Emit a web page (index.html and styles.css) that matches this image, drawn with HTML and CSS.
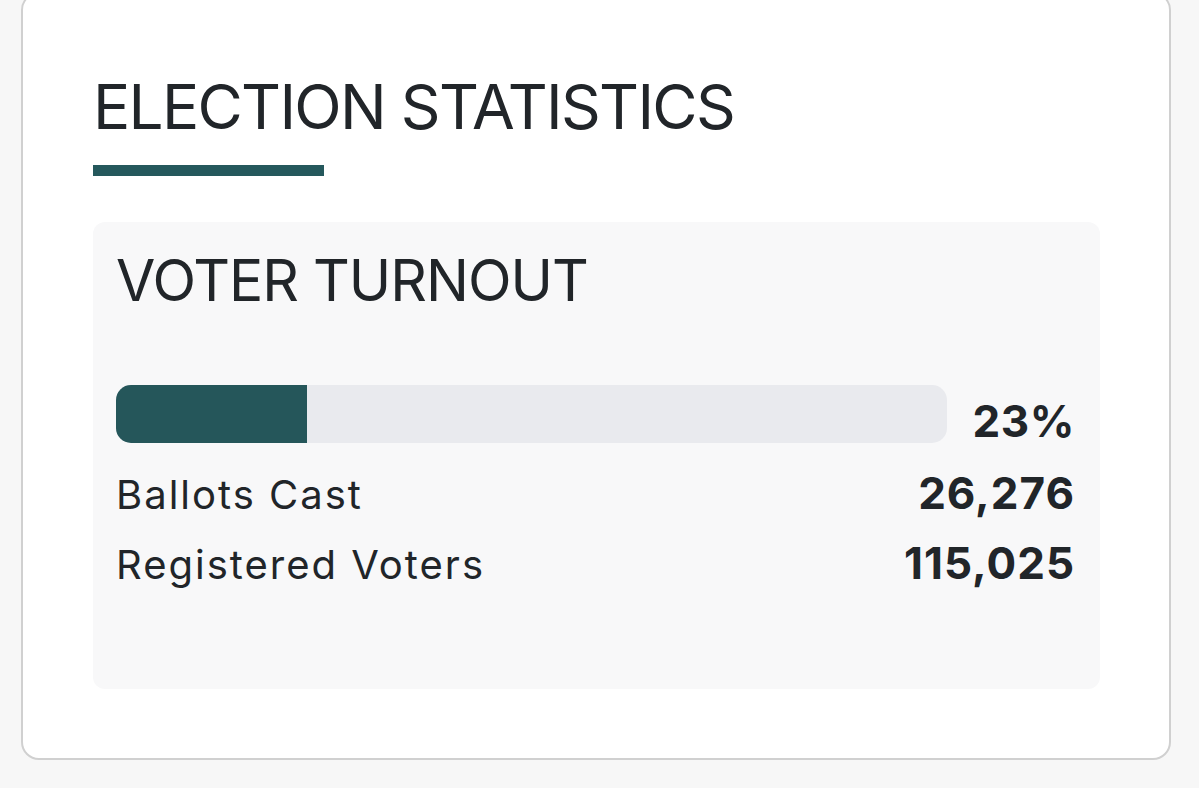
FILE: index.html
```html
<!DOCTYPE html>
<html lang="en">
<head>
  <meta charset="UTF-8" />
  <title>Election Statistics</title>
  <link rel="stylesheet" href="styles.css">
</head>
<body>
  <div class="card">
    <h1 class="title">ELECTION STATISTICS</h1>
    <div class="rule"></div>
    <section class="panel">
      <h2>VOTER TURNOUT</h2>
      <div class="turnout">
        <div class="track"><div class="fill" style="width:23%"></div></div>
        <span class="pct">23%</span>
      </div>
      <div class="row"><span class="label">Ballots Cast</span><b class="num">26,276</b></div>
      <div class="row"><span class="label">Registered Voters</span><b class="num">115,025</b></div>
    </section>
  </div>
</body>
</html>
```

FILE: styles.css
```css
* { box-sizing: border-box; }
body { margin: 0; background: #f7f7f7; font-family: Inter, "Noto Sans", sans-serif; color: #212529; }
.card { margin: -8px 0 0 21px; width: 1150px; background: #fff; border: 2px solid #d0d0d0; border-radius: 18px; padding: 82px 69px 69px 70px; }
.title { margin: 0; font-size: 62px; line-height: 62px; font-weight: 400; letter-spacing: -1.7px; }
.rule { width: 231px; height: 11px; background: #25585c; margin-top: 27px; }
.panel { margin-top: 46px; background: #f8f8f9; border-radius: 12px; padding: 30px 25px 90px 23px; }
.panel h2 { margin: 0; font-size: 57px; line-height: 57px; font-weight: 400; letter-spacing: -1px; }
.turnout { display: flex; align-items: flex-end; margin-top: 76px; }
.track { flex: 1; height: 58px; background: #e9eaee; border-radius: 15px; overflow: hidden; }
.fill { height: 100%; background: #25565a; }
.pct { width: 128px; text-align: right; font-size: 44px; line-height: 44px; font-weight: 700; letter-spacing: 0.6px; }
.row { display: flex; justify-content: space-between; align-items: baseline; line-height: 69px; }
.turnout + .row { margin-top: 16px; }
.label { font-size: 40px; letter-spacing: 2px; }
.num { font-size: 44px; font-weight: 700; letter-spacing: 1px; }
```
